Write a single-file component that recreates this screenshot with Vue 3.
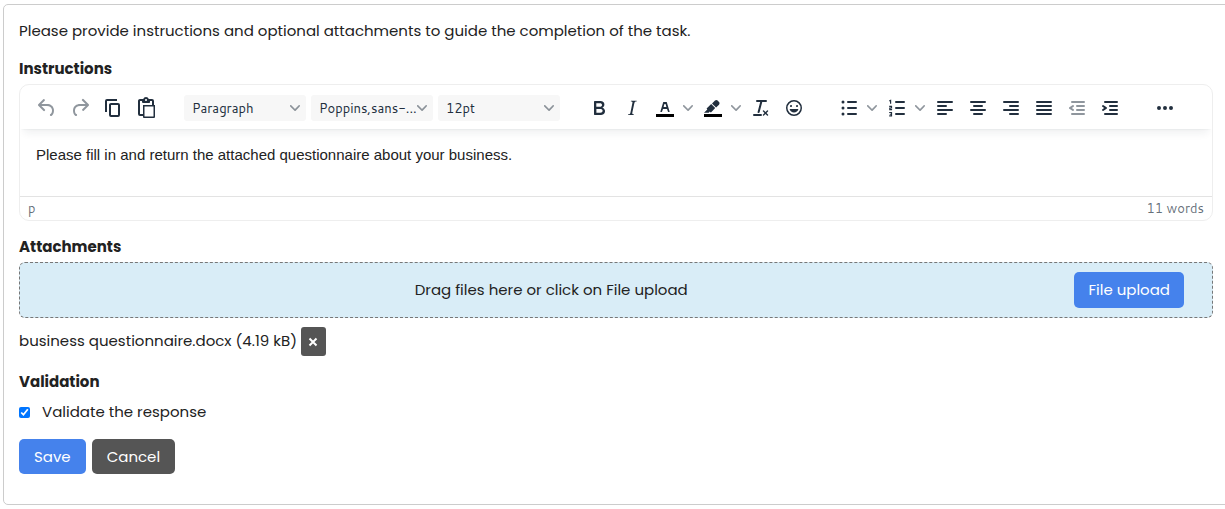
<script setup>
import { ref } from 'vue'

const line = (x, y, w) => `M${x} ${y - 1}h${w}a1 1 0 0 1 0 2h-${w}a1 1 0 0 1 0-2Z`

const ICONS = {
  undo: 'M6.4 8H12c3.7 0 6.2 2 6.8 5.1.6 2.7-.4 5.6-2.3 6.8a1 1 0 0 1-1-1.8c1.1-.6 1.8-2.7 1.4-4.6-.5-2.1-2.1-3.5-4.9-3.5H6.4l3.3 3.3a1 1 0 1 1-1.4 1.4l-5-5a1 1 0 0 1 0-1.4l5-5a1 1 0 0 1 1.4 1.4L6.4 8Z',
  redo: 'M17.6 10H12c-2.8 0-4.4 1.4-4.9 3.5-.4 2 .3 4 1.4 4.6a1 1 0 1 1-1 1.8c-2-1.2-2.9-4.1-2.3-6.8.6-3 3-5.1 6.8-5.1h5.6l-3.3-3.3a1 1 0 1 1 1.4-1.4l5 5a1 1 0 0 1 0 1.4l-5 5a1 1 0 0 1-1.4-1.4l3.3-3.3Z',
  copy: 'M16 3H6a2 2 0 0 0-2 2v11h2V5h10V3Zm1 4a2 2 0 0 1 2 2v10a2 2 0 0 1-2 2h-7a2 2 0 0 1-2-2V9c0-1.2.9-2 2-2h7Zm0 12V9h-7v10h7Z',
  paste: 'M18 9V5h-2v1c0 .6-.4 1-1 1H9a1 1 0 0 1-1-1V5H6v13h3V9h9ZM9 20H6a2 2 0 0 1-2-2V5c0-1.1.9-2 2-2h3.2A3 3 0 0 1 12 1a3 3 0 0 1 2.8 2H18a2 2 0 0 1 2 2v4h1v12.1c0 .5-.4.9-.9.9H9.9a.9.9 0 0 1-.9-.9V20Zm1.5-9.5v10h9v-10h-9ZM12 3a1 1 0 0 0-1 1c0 .5.4 1 1 1s1-.5 1-1-.4-1-1-1Z',
  bold: 'M7.8 19c-.3 0-.5 0-.6-.2l-.2-.5V5.7c0-.2 0-.4.2-.5l.6-.2h5c1.5 0 2.7.3 3.5 1 .7.6 1.1 1.4 1.1 2.5a3 3 0 0 1-.6 1.9c-.4.6-1 1-1.6 1.2.4.1.9.3 1.3.6s.8.7 1 1.2c.4.4.5 1 .5 1.6 0 1.3-.4 2.3-1.3 3-.8.7-2.1 1-3.8 1H7.8Zm5-8.3c.6 0 1.2-.1 1.6-.5.4-.3.6-.7.6-1.3 0-1.1-.8-1.7-2.3-1.7H9.3v3.5h3.4Zm.5 6c.7 0 1.3-.1 1.7-.4.4-.4.6-.9.6-1.5s-.2-1-.7-1.4c-.4-.3-1-.4-2-.4H9.4v3.8h4Z',
  italic: 'm16.7 4.7-.1.9h-.3c-.6 0-1 0-1.4.3-.3.3-.4.6-.5 1.1l-2.1 9.8v.6c0 .5.4.8 1.4.8h.2l-.2.8H8l.2-.8h.2c1.1 0 1.8-.5 2-1.5l2-9.8.1-.5c0-.6-.4-.8-1.4-.8h-.3l.2-.9h5.8Z',
  color: 'M8.7 16h-.8a.5.5 0 0 1-.5-.6l2.7-9c.1-.3.3-.4.5-.4h2.8c.2 0 .4.1.5.4l2.7 9a.5.5 0 0 1-.5.6h-.8a.5.5 0 0 1-.4-.4l-.7-2.2c0-.3-.3-.4-.5-.4h-3.4c-.2 0-.4.1-.5.4l-.7 2.2c0 .3-.2.4-.4.4Zm2.6-7.6-.6 2a.5.5 0 0 0 .5.6h1.6a.5.5 0 0 0 .5-.6l-.6-2c0-.3-.3-.4-.5-.4h-.4c-.2 0-.4.1-.5.4Z',
  highlight: 'M7.7 16.7H3l3.3-3.3-.7-.8L10.2 8l4 4.1-4 4.2c-.2.2-.6.2-.8 0l-.6-.7-1.1 1.1Zm5-7.5L11 7.4l3-2.9a2 2 0 0 1 2.6 0L18 6c.7.7.7 2 0 2.7l-2.9 2.9-1.8-1.8-.6-.6Z',
  clear: 'M13.2 6a1 1 0 0 1 0 .2l-2.6 10a1 1 0 0 1-1 .8h-.2a.8.8 0 0 1-.8-1l2.6-10H8a1 1 0 1 1 0-2h9a1 1 0 0 1 0 2h-3.8ZM5 18h7a1 1 0 0 1 0 2H5a1 1 0 0 1 0-2Zm13 1.5L16.5 18 15 19.5a.7.7 0 0 1-1-1l1.5-1.5-1.5-1.5a.7.7 0 0 1 1-1l1.5 1.5 1.5-1.5a.7.7 0 0 1 1 1L17.5 17l1.5 1.5a.7.7 0 0 1-1 1Z',
  emoji: 'M9 11c.6 0 1-.4 1-1s-.4-1-1-1a1 1 0 0 0-1 1c0 .6.4 1 1 1Zm6 0c.6 0 1-.4 1-1s-.4-1-1-1a1 1 0 0 0-1 1c0 .6.4 1 1 1Zm-3 5.5c2.1 0 4-1.5 4.4-3.5H7.6c.5 2 2.3 3.5 4.4 3.5ZM12 4a8 8 0 1 0 0 16 8 8 0 0 0 0-16Zm0 14.5a6.5 6.5 0 1 1 0-13 6.5 6.5 0 0 1 0 13Z',
  bullets: [6, 12, 18].map(y => line(11, y, 8) + `M4.500 ${y}a1.500 1.500 0 1 1 3 0 1.500 1.500 0 0 1-3 0Z`).join(''),
  numbers: [6, 12, 18].map(y => line(11, y, 8)).join('') + 'M4.200 4.300 6.200 3.500v4.300H5V5.200l-.8.300ZM4.200 9.800h2.900v2.600H5.400v.7H7.100v1.100H4.200v-2.700h1.700v-.6H4.200ZM4.200 16h2.900v4.400H4.200v-1.100h1.700v-.6H4.700v-.9h1.200v-.7H4.200Z',
  left: line(5, 6, 14) + line(5, 10, 8) + line(5, 14, 14) + line(5, 18, 8),
  center: line(5, 6, 14) + line(8, 10, 8) + line(5, 14, 14) + line(8, 18, 8),
  right: line(5, 6, 14) + line(11, 10, 8) + line(5, 14, 14) + line(11, 18, 8),
  justify: [6, 10, 14, 18].map(y => line(5, y, 14)).join(''),
  outdent: line(7, 6, 12) + line(12, 10, 7) + line(12, 14, 7) + line(7, 18, 12) + 'M8.600 13.200a1 1 0 0 1-1.200 1.600l-3-2a1 1 0 0 1 0-1.600l3-2a1 1 0 0 1 1.200 1.600L6.800 12l1.800 1.200Z',
  indent: line(7, 6, 12) + line(12, 10, 7) + line(12, 14, 7) + line(7, 18, 12) + 'M4.400 13.200 6.200 12l-1.800-1.200a1 1 0 0 1 1.200-1.600l3 2a1 1 0 0 1 0 1.600l-3 2a1 1 0 1 1-1.200-1.600Z',
  more: 'M6 10a2 2 0 1 0 0 4 2 2 0 0 0 0-4Zm12 0a2 2 0 1 0 0 4 2 2 0 0 0 0-4Zm-6 0a2 2 0 1 0 0 4 2 2 0 0 0 0-4Z',
}
const CHEVRON = 'M8.7 2.2c.3-.3.8-.3 1 0 .4.4.4.9 0 1.2L5.7 7.8c-.3.3-.9.3-1.2 0L.2 3.4a.8.8 0 0 1 0-1.2c.3-.3.8-.3 1.1 0L5 6l3.7-3.8Z'

const groups = [
  [
    { icon: 'undo', label: 'Undo', disabled: true },
    { icon: 'redo', label: 'Redo', disabled: true },
    { icon: 'copy', label: 'Copy' },
    { icon: 'paste', label: 'Paste' },
  ],
  [
    { select: 'Paragraph', label: 'Block format' },
    { select: 'Poppins,sans-...', label: 'Font family' },
    { select: '12pt', label: 'Font size' },
  ],
  [
    { icon: 'bold', label: 'Bold' },
    { icon: 'italic', label: 'Italic' },
    { icon: 'color', label: 'Text color', menu: true, bar: true },
    { icon: 'highlight', label: 'Background color', menu: true, bar: true },
    { icon: 'clear', label: 'Clear formatting' },
    { icon: 'emoji', label: 'Emojis' },
  ],
  [
    { icon: 'bullets', label: 'Bullet list', menu: true },
    { icon: 'numbers', label: 'Numbered list', menu: true },
    { icon: 'left', label: 'Align left' },
    { icon: 'center', label: 'Align center' },
    { icon: 'right', label: 'Align right' },
    { icon: 'justify', label: 'Justify' },
    { icon: 'outdent', label: 'Decrease indent', disabled: true },
    { icon: 'indent', label: 'Increase indent' },
  ],
  [{ icon: 'more', label: 'More' }],
]

const text = ref('Please fill in and return the attached questionnaire about your business.')
const validate = ref(true)
</script>

<template>
  <div class="page">
    <form class="panel" @submit.prevent>
      <p class="intro">Please provide instructions and optional attachments to guide the completion of the task.</p>

      <label class="heading" for="instructions">Instructions</label>
      <div class="editor">
        <div class="toolbar" role="toolbar" aria-label="Formatting">
          <div v-for="(group, g) in groups" :key="g" class="group" :class="{ selects: group[0].select }">
            <template v-for="item in group" :key="item.label">
              <span v-if="item.select" class="pick">
                <select :aria-label="item.label">
                  <option>{{ item.select }}</option>
                </select>
                <svg class="chevron" viewBox="0 0 10 10"><path :d="CHEVRON" /></svg>
              </span>
              <template v-else>
                <button type="button" class="tool" :aria-label="item.label" :disabled="item.disabled">
                  <svg class="icon" viewBox="0 0 24 24">
                    <path :d="ICONS[item.icon]" fill-rule="evenodd" />
                    <path v-if="item.bar" class="bar" d="M3 18h18v3H3z" />
                  </svg>
                </button>
                <button v-if="item.menu" type="button" class="more" :aria-label="item.label + ' menu'">
                  <svg class="chevron" viewBox="0 0 10 10"><path :d="CHEVRON" /></svg>
                </button>
              </template>
            </template>
          </div>
        </div>
        <textarea id="instructions" v-model="text" rows="2" spellcheck="false"></textarea>
        <div class="status"><span>p</span><span>11 words</span></div>
      </div>

      <h2 class="heading">Attachments</h2>
      <div class="drop">
        <span class="hint">Drag files here or click on File upload</span>
        <button type="button" class="btn upload">File upload</button>
      </div>
      <div class="file">
        <span>business questionnaire.docx (4.19 kB)</span>
        <button type="button" class="btn dark remove" aria-label="Remove file">
          <svg viewBox="0 0 10 10"><path d="M1.500 1.500 8.500 8.500M8.500 1.500 1.500 8.500" /></svg>
        </button>
      </div>

      <h2 class="heading">Validation</h2>
      <label class="check"><input v-model="validate" type="checkbox"><span>Validate the response</span></label>
      <div class="actions">
        <button type="submit" class="btn">Save</button>
        <button type="button" class="btn dark">Cancel</button>
      </div>
    </form>
  </div>
</template>

<style>
body {
  background: #fff;
}
</style>

<style scoped>
* {
  box-sizing: border-box;
}
.page {
  overflow: hidden;
  padding: 4px 0 4px 3px;
  font: 15px/24px Poppins, Inter, sans-serif;
  color: #222;
}
.panel {
  margin-right: -10px;
  padding: 14px 21px 30px 15px;
  border: 1px solid #ccc;
  border-radius: 5px;
}
.intro {
  margin: 0 0 14px;
}
.heading {
  display: block;
  margin: 0 0 3px;
  font-size: 15px;
  line-height: 24px;
  font-weight: 700;
}
.editor {
  margin-bottom: 14px;
  border: 1px solid #eee;
  border-radius: 10px;
  overflow: hidden;
}
.toolbar {
  position: relative;
  display: flex;
  gap: 22px;
  height: 44px;
  padding: 2px 10px 0;
  align-items: center;
  box-shadow: 0 2px 2px -2px rgba(34, 47, 62, 0.1), 0 8px 8px -4px rgba(34, 47, 62, 0.07);
}
.group {
  display: flex;
  align-items: center;
}
.selects {
  gap: 5px;
}
button {
  font: inherit;
  border: 0;
  padding: 0;
  cursor: pointer;
}
.tool,
.more {
  display: flex;
  align-items: center;
  justify-content: center;
  width: 33px;
  height: 28px;
  background: none;
  color: #222f3e;
}
.more {
  width: 15px;
  padding-left: 2px;
  justify-content: flex-start;
}
.tool:disabled {
  opacity: 0.5;
}
.icon {
  width: 24px;
  height: 24px;
  fill: currentColor;
}
.bar {
  fill: #000;
}
.chevron {
  width: 10px;
  height: 10px;
  fill: #222f3e;
  opacity: 0.5;
}
.pick {
  display: grid;
  align-items: center;
  width: 122px;
}
.pick > * {
  grid-area: 1 / 1;
}
.pick .chevron {
  justify-self: end;
  margin-right: 6px;
  pointer-events: none;
}
select {
  appearance: none;
  width: 100%;
  height: 26px;
  padding: 0 8px;
  border: 0;
  border-radius: 3px;
  background: #f7f7f7;
  font: 13px/26px Cantarell, "Noto Sans", sans-serif;
  color: #222f3e;
}
textarea {
  display: block;
  width: 100%;
  height: 67px;
  padding: 15px 16px;
  border: 0;
  outline: 0;
  resize: none;
  background: none;
  font: 15px/22px "Liberation Sans", Arial, sans-serif;
  color: #222;
}
.status {
  display: flex;
  justify-content: space-between;
  padding: 0 8px;
  border-top: 1px solid #e3e3e3;
  font: 13px/23px Cantarell, "Noto Sans", sans-serif;
  color: #222f3eb3;
}
.drop {
  display: flex;
  align-items: center;
  gap: 6px;
  height: 56px;
  margin-bottom: 9px;
  padding: 0 28px 0 14px;
  border: 1px dashed #777;
  border-radius: 6px;
  background: #d9edf7;
}
.hint {
  flex: 1;
  text-align: center;
}
.btn {
  height: 35px;
  padding: 0 15px;
  border-radius: 5px;
  background: #4582ec;
  color: #fff;
}
.upload {
  height: 36px;
  padding: 0 14px;
}
.dark {
  background: #555;
}
.file {
  display: flex;
  align-items: flex-start;
  gap: 4px;
  margin-bottom: 14px;
  line-height: 28px;
}
.remove {
  display: grid;
  place-items: center;
  width: 25px;
  height: 29px;
  padding: 0;
  border-radius: 3px;
}
.remove svg {
  width: 10px;
  height: 10px;
  stroke: #fff;
  stroke-width: 2;
}
.check {
  display: flex;
  align-items: center;
  gap: 12px;
  margin: 6px 0 15px;
}
.check input {
  width: 11px;
  height: 11px;
  margin: 0;
}
.actions {
  display: flex;
  gap: 6px;
}
</style>
